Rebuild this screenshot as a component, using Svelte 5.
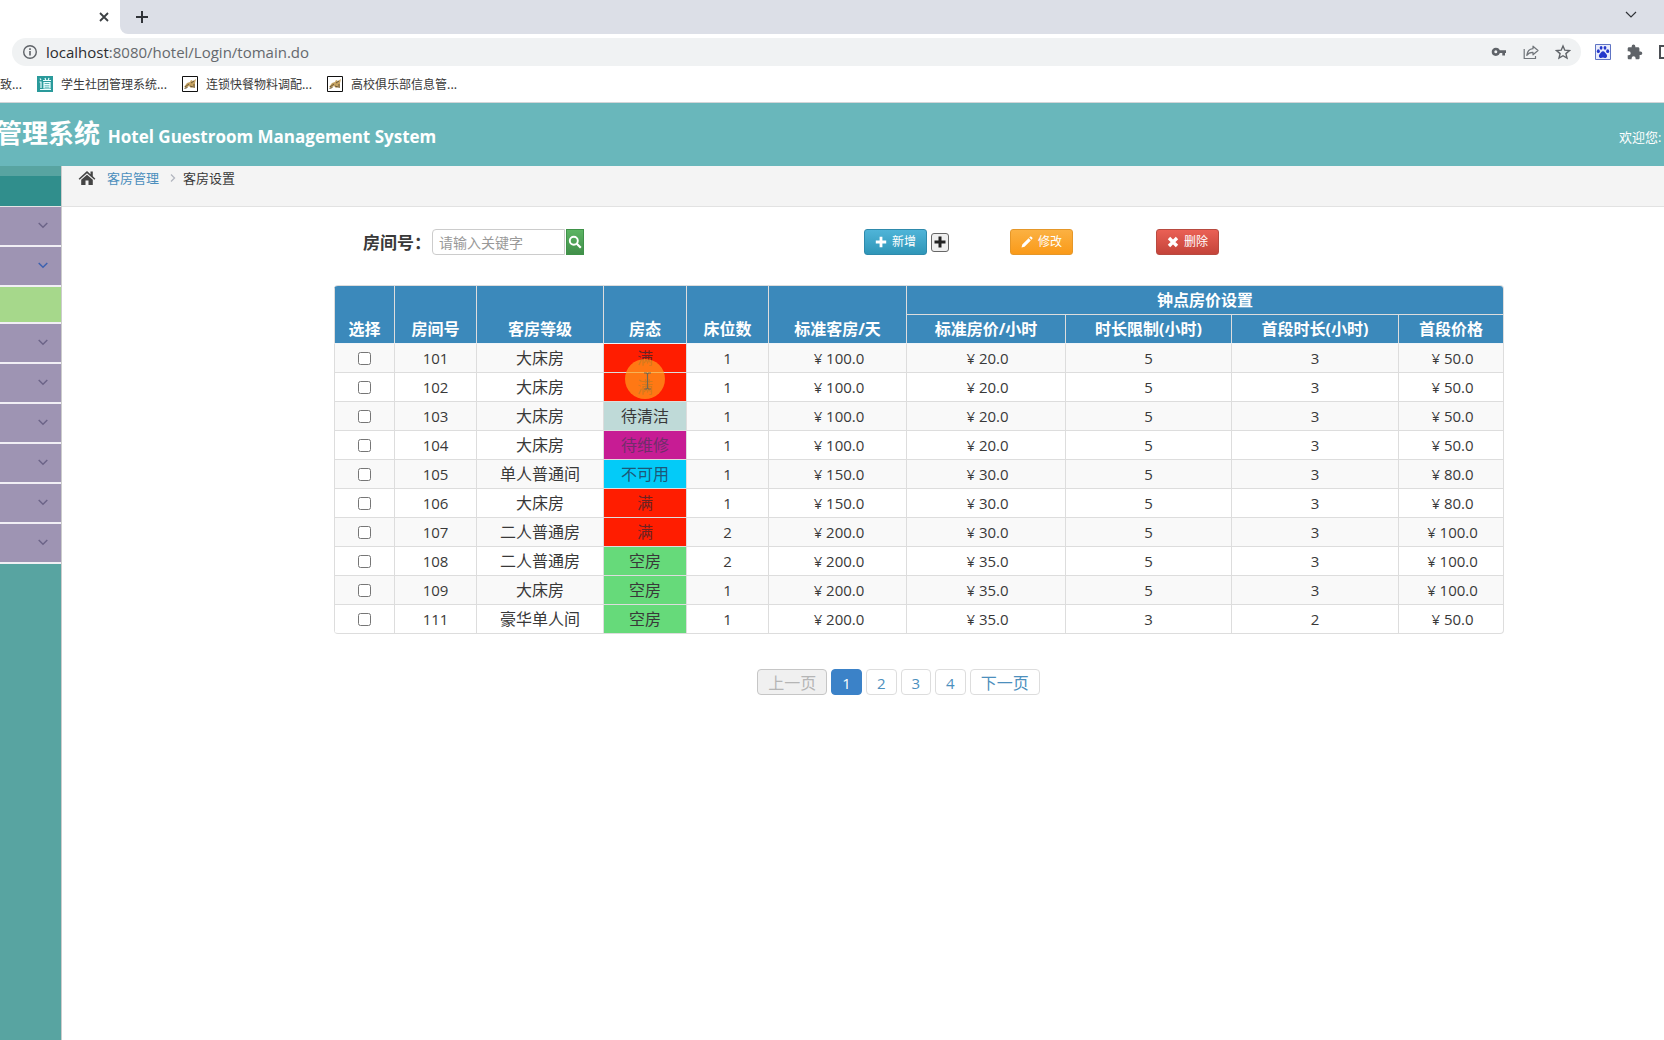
<script lang="ts">
    let keyword = $state('')
    let page = $state(1)

    const bookmarks = [
        { title: '学生社团管理系统...', icon: 'dao' },
        { title: '连锁快餐物料调配...', icon: 'cat' },
        { title: '高校俱乐部信息管...', icon: 'cat' },
    ]

    const menu = ['', 'open', 'current', '', '', '', '', '', '']

    const columns = [60, 82, 127, 83, 82, 138, 159, 166, 167, 105]

    const status: Record<string, string> = {
        '满': 'full',
        '待清洁': 'dirty',
        '待维修': 'repair',
        '不可用': 'disabled',
        '空房': 'free',
    }

    // no, level, state, beds, day price, hour price, limit, first hours, first price
    const rooms = $state([
        ['101', '大床房', '满', '1', '100.0', '20.0', '5', '3', '50.0'],
        ['102', '大床房', '满', '1', '100.0', '20.0', '5', '3', '50.0'],
        ['103', '大床房', '待清洁', '1', '100.0', '20.0', '5', '3', '50.0'],
        ['104', '大床房', '待维修', '1', '100.0', '20.0', '5', '3', '50.0'],
        ['105', '单人普通间', '不可用', '1', '150.0', '30.0', '5', '3', '80.0'],
        ['106', '大床房', '满', '1', '150.0', '30.0', '5', '3', '80.0'],
        ['107', '二人普通房', '满', '2', '200.0', '30.0', '5', '3', '100.0'],
        ['108', '二人普通房', '空房', '2', '200.0', '35.0', '5', '3', '100.0'],
        ['109', '大床房', '空房', '1', '200.0', '35.0', '5', '3', '100.0'],
        ['111', '豪华单人间', '空房', '1', '200.0', '35.0', '3', '2', '50.0'],
    ])
</script>

<div class="window">
    <div class="tabs">
        <div class="tab">
            <button class="plain" aria-label="关闭">
                <svg width="10" height="10" viewBox="0 0 10 10"><path d="M1 1l8 8M9 1L1 9" stroke="#3c4043" stroke-width="1.8"/></svg>
            </button>
        </div>
        <div class="strip">
            <button class="plain" aria-label="新标签页">
                <svg width="12" height="12" viewBox="0 0 12 12"><path d="M6 0v12M0 6h12" stroke="#303338" stroke-width="2"/></svg>
            </button>
            <button class="plain down" aria-label="搜索标签页">
                <svg width="12" height="8" viewBox="0 0 12 8"><path d="M1 1l5 5 5-5" fill="none" stroke="#303338" stroke-width="1.2"/></svg>
            </button>
        </div>
    </div>

    <div class="address">
        <div class="url">
            <svg width="16" height="16" viewBox="0 0 16 16"><circle cx="8" cy="8" r="6.3" fill="none" stroke="#5f6368" stroke-width="1.4"/><path d="M8 7v4.5M8 4.3v1.6" stroke="#5f6368" stroke-width="1.6"/></svg>
            <span class="path"><b>localhost</b>:8080/hotel/Login/tomain.do</span>
            <span class="tools">
                <svg width="16" height="16" viewBox="0 0 16 16"><circle cx="4.8" cy="7.8" r="2.8" fill="none" stroke="#5f6368" stroke-width="2.6"/><path d="M7.500 6.300H15v2.800h-1V11.500h-2.700V9.100H7.500z" fill="#5f6368"/></svg>
                <svg width="16" height="16" viewBox="0 0 16 16"><path d="M1.2 5v9.500h11.300V12" fill="none" stroke="#70757a" stroke-width="1.2"/><path d="M10 2.200L15 6.500l-5 4.300V8.400C7 8.300 5.200 9.300 3.800 11.400 4.200 7.800 6.400 5 10 4.700z" fill="none" stroke="#70757a" stroke-width="1.2" stroke-linejoin="round"/></svg>
                <svg width="16" height="16" viewBox="0 0 16 16"><path d="M8 2l1.800 4.200 4.600.4-3.500 3 1.100 4.500L8 11.700l-4 2.400 1.100-4.500-3.500-3 4.600-.4z" fill="none" stroke="#5f6368" stroke-width="1.4"/></svg>
            </span>
        </div>
        <div class="extensions">
            <svg width="16" height="16" viewBox="0 0 16 16"><path d="M.5.5h15v15H.5z" fill="#e9ecfb" stroke="#5f74c4"/><g fill="#2438cb"><ellipse cx="3.300" cy="7.200" rx="1.500" ry="1.900"/><ellipse cx="6.100" cy="3.800" rx="1.400" ry="1.900"/><ellipse cx="10" cy="3.800" rx="1.400" ry="1.900"/><ellipse cx="12.700" cy="7.200" rx="1.500" ry="1.900"/><path d="M8 7.200c1.700 0 2 1.600 3.200 2.700 1.600 1.500.9 4-1.200 4-.8 0-1.200-.3-2-.3s-1.200.3-2 .3c-2.100 0-2.800-2.500-1.200-4C6 8.800 6.300 7.200 8 7.200z"/></g></svg>
            <svg width="16" height="16" viewBox="0 0 16 16"><path d="M13.400 7.500h-1V4.700c0-.8-.6-1.400-1.400-1.400H8.300v-1a1.800 1.800 0 0 0-3.600 0v1H2c-.8 0-1.300.6-1.300 1.400v2.500h1a2 2 0 0 1 0 4h-1v2.700c0 .8.5 1.400 1.300 1.400h2.600v-1a2 2 0 0 1 4 0v1h2.600c.8 0 1.400-.6 1.400-1.400v-2.800h1a1.800 1.800 0 0 0-.2-3.600z" fill="#5f6368"/></svg>
            <svg width="14" height="14" viewBox="0 0 14 14"><path d="M1 1h12v12H1z" fill="none" stroke="#4c4f54" stroke-width="2"/></svg>
        </div>
    </div>

    <nav class="bookmarks">
        <a href="#more">致...</a>
        {#each bookmarks as mark}
            <a href="#bookmark">
                {#if mark.icon === 'dao'}
                    <svg width="16" height="16" viewBox="0 0 16 16"><path d="M0 0h16v16H0z" fill="#2a9a9b"/><path d="M3 2.500l1 1.500M2.500 6h1.500v6M3 13.500h11M6 4.500h8M8 2l.7 2M12 2l-.7 2M7 6.500h6v5.500H7zM7 8.300h6M7 10.200h6" fill="none" stroke="#e9ffff" stroke-width="1.200"/></svg>
                {:else}
                    <svg width="16" height="16" viewBox="0 0 16 16"><path d="M.5.5h15v15H.5z" fill="#fff" stroke="#111"/><path d="M2 11l3-4 3-1 1-2 2 1 3-2-1 4v5l-2-1-2 1-2-2-3 2z" fill="#c5a261"/><path d="M3 11l4-3M9 7l3-2M8 10l3 1M2.500 12.500l3-1M12 8v4" stroke="#6b5a3c"/></svg>
                {/if}
                <span>{mark.title}</span>
            </a>
        {/each}
    </nav>

    <header>
        <h1>管理系统 <small>Hotel Guestroom Management System</small></h1>
        <span class="welcome">欢迎您:</span>
    </header>

    <div class="body">
        <aside>
            <div class="shortcut"></div>
            {#each menu as item}
                <button class="item {item}" aria-label="菜单">
                    {#if item !== 'current'}
                        <svg width="10" height="7" viewBox="0 0 10 7"><path d="M.7 1L5 5.200 9.300 1" fill="none" stroke="currentColor" stroke-width="1.500"/></svg>
                    {/if}
                </button>
            {/each}
        </aside>

        <main>
            <div class="breadcrumb">
                <svg width="18" height="16" viewBox="0 0 18 16"><path d="M9 1L.6 8.700l1 1.100L9 3.200l7.400 6.600 1-1.100-2.600-2.400V1.500h-2.300v2.700z" fill="#444"/><path d="M3.200 9.800L9 4.700l5.800 5.100V15h-4.300v-4.500H7.500V15H3.200z" fill="#444"/></svg>
                <a href="#rooms">客房管理</a>
                <svg class="sep" width="6" height="8" viewBox="0 0 6 8"><path d="M1 .5L4.500 4 1 7.500" fill="none" stroke="#b2b6bf" stroke-width="1.300"/></svg>
                <span>客房设置</span>
            </div>

            <div class="content">
                <div class="toolbar">
                    <form class="search">
                        <label for="keyword">房间号：</label>
                        <input id="keyword" type="text" placeholder="请输入关键字" bind:value={keyword}/>
                        <button type="button" aria-label="搜索">
                            <svg width="14" height="14" viewBox="0 0 14 14"><circle cx="5.800" cy="5.800" r="4" fill="none" stroke="#fff" stroke-width="1.900"/><path d="M8.800 8.800l4 4" stroke="#fff" stroke-width="2.200"/></svg>
                        </button>
                    </form>
                    <div class="add">
                        <button class="btn info">
                            <svg width="12" height="12" viewBox="0 0 12 12"><path d="M6 .8v10.400M.8 6h10.400" stroke="#fff" stroke-width="2.800"/></svg>新增
                        </button>
                        <button class="more" aria-label="更多">
                            <svg width="12" height="12" viewBox="0 0 12 12"><path d="M6 .5v11M.5 6h11" stroke="#222" stroke-width="3"/></svg>
                        </button>
                    </div>
                    <div>
                        <button class="btn warning">
                            <svg width="12" height="12" viewBox="0 0 12 12"><path d="M.5 11.500l.8-3L7.600 2.200l2.200 2.200L3.500 10.700zM8.300 1.500l.9-.9c.9-.6 2.800 1.200 2.200 2.200l-.9.9z" fill="#fff"/></svg>修改
                        </button>
                    </div>
                    <div>
                        <button class="btn danger">
                            <svg width="12" height="12" viewBox="0 0 12 12"><path d="M2 2l8 8M10 2l-8 8" stroke="#fff" stroke-width="3.400"/></svg>删除
                        </button>
                    </div>
                </div>

                <table>
                    <colgroup>
                        {#each columns as width}
                            <col style="width: {width}px"/>
                        {/each}
                    </colgroup>
                    <thead>
                        <tr>
                            <th rowspan="2">选择</th>
                            <th rowspan="2">房间号</th>
                            <th rowspan="2">客房等级</th>
                            <th rowspan="2">房态</th>
                            <th rowspan="2">床位数</th>
                            <th rowspan="2">标准客房/天</th>
                            <th colspan="4">钟点房价设置</th>
                        </tr>
                        <tr>
                            <th>标准房价/小时</th>
                            <th>时长限制(小时)</th>
                            <th>首段时长(小时)</th>
                            <th>首段价格</th>
                        </tr>
                    </thead>
                    <tbody>
                        {#each rooms as [no, level, state, beds, day, hour, limit, first, price]}
                            <tr>
                                <td><input type="checkbox" aria-label={no}/></td>
                                <td>{no}</td>
                                <td class="cn">{level}</td>
                                <td class="cn {status[state]}">
                                    {state}
                                    {#if no === '102'}
                                        <span class="pointer">
                                            <svg width="9" height="18" viewBox="0 0 9 18"><path d="M1 1h2.500l1 1 1-1H8M4.500 2v14M1 17h2.500l1-1 1 1H8" fill="none" stroke="#75664f" stroke-width="1.200"/></svg>
                                        </span>
                                    {/if}
                                </td>
                                <td>{beds}</td>
                                <td class="money">¥ {day}</td>
                                <td class="money">¥ {hour}</td>
                                <td>{limit}</td>
                                <td>{first}</td>
                                <td class="money">¥ {price}</td>
                            </tr>
                        {/each}
                    </tbody>
                </table>

                <div class="pager">
                    <button class="step" disabled={page === 1} onclick={() => page--}>上一页</button>
                    {#each [1, 2, 3, 4] as n}
                        <button class:active={page === n} onclick={() => page = n}>{n}</button>
                    {/each}
                    <button class="step" disabled={page === 4} onclick={() => page++}>下一页</button>
                </div>
            </div>
        </main>
    </div>
</div>

<style>
    :global(body){
        margin: 0;
        background: #fff;
    }
    .window{
        display: flex;
        flex-direction: column;
        min-height: 100vh;
        overflow: hidden;
        font: 13px/20px "Open Sans", "Noto Sans CJK SC", sans-serif;
        color: #393939;
    }
    .window *{
        box-sizing: border-box;
    }
    svg{
        display: block;
        flex: none;
    }
    button, input{
        font: inherit;
        margin: 0;
    }
    a{
        text-decoration: none;
        color: inherit;
    }
    .plain{
        border: 0;
        padding: 0;
        background: none;
    }

    /* browser chrome */
    .tabs{
        display: flex;
        height: 34px;
        background: linear-gradient(90deg, #fff 50%, #dcdfe7 50%);
    }
    .tab{
        display: flex;
        align-items: center;
        justify-content: flex-end;
        width: 120px;
        padding-right: 11px;
        background: #fff;
        border-top-right-radius: 8px;
    }
    .strip{
        flex: 1;
        display: flex;
        align-items: center;
        justify-content: space-between;
        padding: 0 27px 0 16px;
        background: #dcdfe7;
        border-bottom-left-radius: 8px;
    }
    .down{
        padding-bottom: 5px;
    }
    .address{
        display: flex;
        align-items: center;
        padding: 4px 0 0 12px;
    }
    .url{
        flex: 1;
        display: flex;
        align-items: center;
        height: 28px;
        padding: 0 10px;
        border-radius: 14px;
        background: #f0f2f3;
    }
    .path{
        margin-left: 8px;
        padding-bottom: 1px;
        font-size: 15px;
        color: #65696d;
        b{
            font-weight: 400;
            color: #2b2d30;
        }
    }
    .tools{
        display: flex;
        gap: 16px;
        margin-left: auto;
    }
    .extensions{
        display: flex;
        align-items: center;
        gap: 16px;
        width: 69px;
        margin-left: 14px;
        overflow: hidden;
    }
    .bookmarks{
        display: flex;
        align-items: center;
        gap: 15px;
        height: 37px;
        border-bottom: 1px solid #d2d5d8;
        font: 12px/20px "Noto Sans CJK SC", sans-serif;
        a{
            display: flex;
            gap: 8px;
            align-items: center;
        }
    }

    /* page header */
    header{
        display: flex;
        align-items: center;
        justify-content: space-between;
        height: 63px;
        background: #69b7bb;
        color: #fff;
    }
    h1{
        margin: 0 0 0 -4px;
        font-size: 26px;
        line-height: 40px;
        white-space: nowrap;
        small{
            margin-left: 1px;
            font-size: 17px;
        }
    }
    .welcome{
        width: 45px;
        padding-top: 4px;
        white-space: nowrap;
    }

    .body{
        flex: 1;
        display: flex;
    }
    aside{
        display: flex;
        flex-direction: column;
        width: 62px;
        border-right: 1px solid #ccc;
        background: #58a4a1;
    }
    .shortcut{
        height: 41px;
        border-top: 10px solid #58a4a1;
        border-bottom: 1px solid #e5e5e5;
        background: #308e8c;
    }
    .item{
        display: flex;
        align-items: center;
        justify-content: flex-end;
        height: 40px;
        padding: 0 13px 2px 0;
        border: 0;
        border-bottom: 2px solid #f1eff5;
        background: #9e94b3;
        color: #6c6488;
    }
    .item.open{
        color: #3d62b0;
    }
    .item.current{
        height: 37px;
        background: #a6d88b;
    }
    main{
        flex: 1;
        min-width: 0;
    }
    .breadcrumb{
        display: flex;
        align-items: center;
        height: 41px;
        padding: 0 16px 16px;
        border-bottom: 1px solid #e2e2e2;
        background: #f4f4f4;
        a{
            margin-left: 11px;
            color: #4c8fbd;
        }
        .sep{
            margin: 0 7px 0 11px;
        }
    }
    .content{
        padding: 22px 161px 0 272px;
    }

    .toolbar{
        display: grid;
        grid-template-columns: 530fr 146fr 146fr 347fr;
        align-items: center;
        height: 26px;
        margin-bottom: 30px;
    }
    .search{
        display: flex;
        align-items: center;
        padding-left: 29px;
        label{
            width: 69px;
            padding-top: 2px;
            font-size: 17px;
            font-weight: 700;
            white-space: nowrap;
        }
        input{
            width: 133px;
            height: 26px;
            padding: 0 6px;
            border: 1px solid #ccc;
            border-radius: 4px 0 0 4px;
            font-size: 14px;
        }
        input::placeholder{
            color: #999;
        }
        button{
            display: flex;
            align-items: center;
            justify-content: center;
            width: 18px;
            height: 26px;
            margin-left: 1px;
            padding: 0;
            border: 1px solid #3f9249;
            background: linear-gradient(#5cb463, #418f4a);
        }
    }
    .add{
        display: flex;
        align-items: center;
        gap: 4px;
    }
    .btn{
        display: flex;
        align-items: center;
        justify-content: center;
        gap: 5px;
        width: 63px;
        height: 26px;
        padding: 0;
        border: 1px solid;
        border-radius: 3px;
        color: #fff;
        font-size: 12px;
        white-space: nowrap;
    }
    .info{
        border-color: #2e8aac;
        background: linear-gradient(#4fb4d8, #2f96b8);
    }
    .warning{
        border-color: #e59729;
        background: linear-gradient(#fbb142, #fa9a19);
    }
    .danger{
        border-color: #b84a40;
        background: linear-gradient(#ea6055, #c4443a);
    }
    .more{
        display: flex;
        align-items: center;
        justify-content: center;
        width: 18px;
        height: 19px;
        padding: 0;
        border: 1px solid #666;
        border-radius: 3px;
        background: #efefef;
    }

    table{
        width: 100%;
        table-layout: fixed;
        border: 1px solid #ddd;
        border-left: 0;
        border-radius: 4px;
        border-collapse: separate;
        border-spacing: 0;
        text-align: center;
        font-size: 15px;
        overflow: hidden;
    }
    th, td{
        height: 29px;
        padding: 0;
        border-left: 1px solid #ddd;
        border-top: 1px solid #ddd;
        line-height: 24px;
        white-space: nowrap;
    }
    th{
        padding-bottom: 2px;
        vertical-align: bottom;
        background: #3b89bb;
        color: #fff;
        font-size: 16px;
    }
    thead tr:first-child th{
        height: 28px;
        border-top: 0;
    }
    tbody tr:first-child td{
        border-top-color: #f1f5f9;
    }
    tbody tr:nth-child(odd){
        background: #f9f9f9;
    }
    td input{
        display: block;
        width: 13px;
        height: 13px;
        margin: 0 auto;
    }
    .cn{
        font-size: 16px;
    }
    .money{
        padding-left: 3px;
    }
    .full{
        position: relative;
        background: #ff1d00;
        color: #6b2222;
    }
    .dirty{
        background: #bfdad8;
    }
    .repair{
        background: #c71c94;
        color: #712d6b;
    }
    .disabled{
        background: #03cbf8;
        color: #1c5878;
    }
    .free{
        background: #66da7a;
    }
    .pointer{
        position: absolute;
        top: -14px;
        left: 50%;
        z-index: 1;
        display: flex;
        align-items: center;
        justify-content: center;
        width: 40px;
        height: 40px;
        margin-left: -20px;
        padding: 4px 0 0 4px;
        border-radius: 50%;
        background: rgba(255, 159, 28, .7);
    }

    .pager{
        display: flex;
        justify-content: center;
        gap: 4px;
        padding: 35px 40px 0 0;
        button{
            height: 26px;
            padding: 2px 10px 0;
            border: 1px solid #ddd;
            border-radius: 4px;
            background: #fff;
            color: #4c8fbd;
            font-size: 15px;
            line-height: 22px;
        }
        .step{
            font-size: 16px;
        }
        button:disabled{
            border-color: #c6c6c6;
            background: #f0f0f0;
            color: #b5b5b5;
        }
        button.active{
            border-color: #3b82c8;
            background: #3b82c8;
            color: #fff;
        }
    }
</style>
